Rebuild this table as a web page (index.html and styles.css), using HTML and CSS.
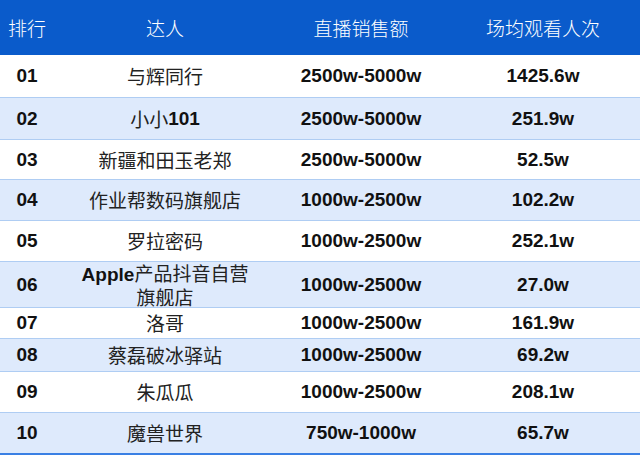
FILE: index.html
```html
<!DOCTYPE html>
<html lang="zh-CN">
<head>
<meta charset="utf-8">
<title>达人直播榜</title>
<link rel="stylesheet" href="styles.css">
</head>
<body>
<div class="table">
  <div class="row head">
    <div class="cell">排行</div>
    <div class="cell">达人</div>
    <div class="cell">直播销售额</div>
    <div class="cell">场均观看人次</div>
  </div>
  <div class="row">
    <div class="cell num">01</div>
    <div class="cell name">与辉同行</div>
    <div class="cell num">2500w-5000w</div>
    <div class="cell num">1425.6w</div>
  </div>
  <div class="row">
    <div class="cell num">02</div>
    <div class="cell name">小小<b>101</b></div>
    <div class="cell num">2500w-5000w</div>
    <div class="cell num">251.9w</div>
  </div>
  <div class="row">
    <div class="cell num">03</div>
    <div class="cell name">新疆和田玉老郑</div>
    <div class="cell num">2500w-5000w</div>
    <div class="cell num">52.5w</div>
  </div>
  <div class="row">
    <div class="cell num">04</div>
    <div class="cell name">作业帮数码旗舰店</div>
    <div class="cell num">1000w-2500w</div>
    <div class="cell num">102.2w</div>
  </div>
  <div class="row">
    <div class="cell num">05</div>
    <div class="cell name">罗拉密码</div>
    <div class="cell num">1000w-2500w</div>
    <div class="cell num">252.1w</div>
  </div>
  <div class="row">
    <div class="cell num">06</div>
    <div class="cell name two"><span><b>Apple</b>产品抖音自营<br>旗舰店</span></div>
    <div class="cell num">1000w-2500w</div>
    <div class="cell num">27.0w</div>
  </div>
  <div class="row">
    <div class="cell num">07</div>
    <div class="cell name">洛哥</div>
    <div class="cell num">1000w-2500w</div>
    <div class="cell num">161.9w</div>
  </div>
  <div class="row">
    <div class="cell num">08</div>
    <div class="cell name">蔡磊破冰驿站</div>
    <div class="cell num">1000w-2500w</div>
    <div class="cell num">69.2w</div>
  </div>
  <div class="row">
    <div class="cell num">09</div>
    <div class="cell name">朱瓜瓜</div>
    <div class="cell num">1000w-2500w</div>
    <div class="cell num">208.1w</div>
  </div>
  <div class="row">
    <div class="cell num">10</div>
    <div class="cell name">魔兽世界</div>
    <div class="cell num">750w-1000w</div>
    <div class="cell num">65.7w</div>
  </div>
</div>
</body>
</html>
```
FILE: styles.css
```css
html, body {
  margin: 0;
  padding: 0;
  background: #ffffff;
}
body {
  width: 640px;
  height: 455px;
  overflow: hidden;
  font-family: "Liberation Sans", "Noto Sans CJK SC", sans-serif;
  color: #1a1a1a;
}
.table {
  display: flex;
  flex-direction: column;
  border-bottom: 2px solid #3a80e4;
}
.row {
  display: grid;
  grid-template-columns: 54px 222px 170px 1fr;
  box-sizing: border-box;
  height: 41px;
  border-top: 1px solid #afcdf3;
}
.row:nth-child(odd) {
  background: #deeafc;
}
.row.head {
  height: 55px;
  background: #0a5bcb;
  color: #ffffff;
  border-top: none;
}
.row:nth-child(2) { height: 42px; border-top: none; }
.row:nth-child(3) { height: 42px; }
.row:nth-child(4) { height: 40px; }
.row:nth-child(5) { height: 41px; }
.row:nth-child(6) { height: 41px; }
.row:nth-child(7) { height: 46px; }
.row:nth-child(8) { height: 31px; }
.row:nth-child(9) { height: 33px; }
.row:nth-child(10) { height: 41px; }
.row:nth-child(11) { height: 41px; }
.cell {
  display: flex;
  align-items: center;
  justify-content: center;
  text-align: center;
  font-size: 19px;
  font-family: "Noto Sans CJK SC", sans-serif;
  font-weight: 400;
  white-space: nowrap;
}
.head .cell {
  font-size: 19px;
  font-weight: 300;
}
.num {
  font-family: "Liberation Sans", Arial, sans-serif;
  font-weight: 700;
  font-size: 19px;
  color: #111111;
}
.name {
  color: #222222;
  line-height: 24px;
}
.name.two {
  line-height: 22px;
}
.name b {
  font-family: "Liberation Sans", Arial, sans-serif;
  font-weight: 700;
  color: #111111;
}
```
